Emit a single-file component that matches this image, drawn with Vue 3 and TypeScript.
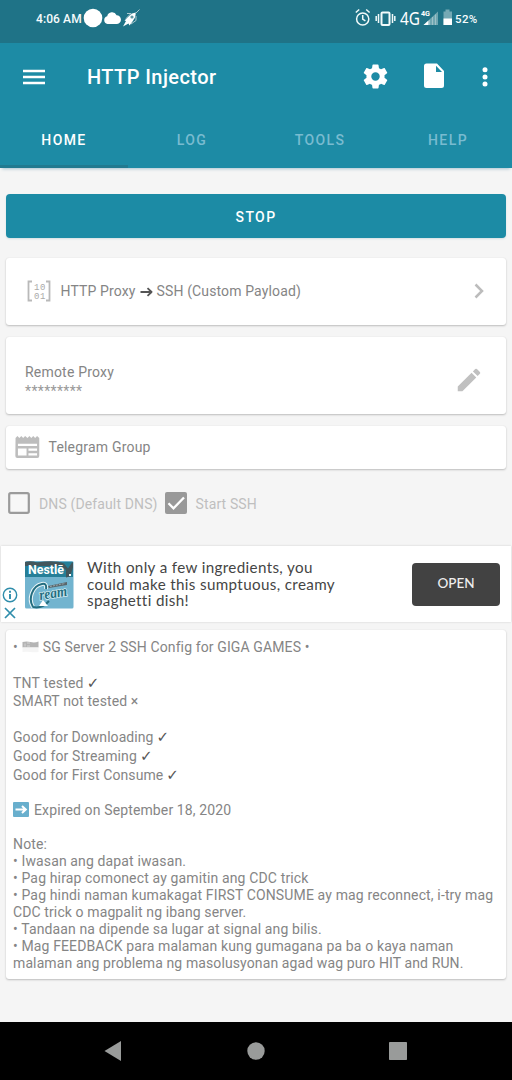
<script setup lang="ts">
interface NoteLine {
  text: string
  height: number
  spacing: number
  mark?: string
  icon?: 'flag' | 'arrow'
}

const tabs: string[] = ['HOME', 'LOG', 'TOOLS', 'HELP']

const lines: NoteLine[] = [
  { text: 'SG Server 2 SSH Config for GIGA GAMES •', height: 18, spacing: 0.12, icon: 'flag' },
  { text: '', height: 18, spacing: 0 },
  { text: 'TNT tested', height: 18, spacing: 0.18, mark: '✓' },
  { text: 'SMART not tested ×', height: 18, spacing: 0.12 },
  { text: '', height: 17, spacing: 0 },
  { text: 'Good for Downloading', height: 19, spacing: 0.06, mark: '✓' },
  { text: 'Good for Streaming', height: 19, spacing: 0.12, mark: '✓' },
  { text: 'Good for First Consume', height: 19, spacing: 0.08, mark: '✓' },
  { text: '', height: 16, spacing: 0 },
  { text: 'Expired on September 18, 2020', height: 19, spacing: 0.13, icon: 'arrow' },
  { text: '', height: 16, spacing: 0 },
  { text: 'Note:', height: 17, spacing: 0.15 },
  { text: '• Iwasan ang dapat iwasan.', height: 17, spacing: 0.13 },
  { text: '• Pag hirap comonect ay gamitin ang CDC trick', height: 17, spacing: 0.14 },
  { text: '• Pag hindi naman kumakagat FIRST CONSUME ay mag reconnect, i-try mag', height: 17, spacing: 0.14 },
  { text: 'CDC trick o magpalit ng ibang server.', height: 17, spacing: 0.11 },
  { text: '• Tandaan na dipende sa lugar at signal ang bilis.', height: 17, spacing: 0.13 },
  { text: '• Mag FEEDBACK para malaman kung gumagana pa ba o kaya naman', height: 17, spacing: 0.13 },
  { text: 'malaman ang problema ng masolusyonan agad wag puro HIT and RUN.', height: 17, spacing: 0.11 },
]
</script>

<template>
  <div class="screen">
    <header class="status">
      <span class="clock">4:06 AM</span>
      <svg class="status-left" width="58" height="22" viewBox="0 0 58 22">
        <circle cx="10" cy="11" r="9.3" fill="#fff" />
        <path d="M24.5 17a4 4 0 0 1-.3-7.8 5 5 0 0 1 9.4-1A4.4 4.4 0 0 1 33.500 17z" fill="#fff" />
        <path d="M53 5.500 49 6.500 44.500 10.500 41.500 13.500 43 14 40 19.500 45.500 16.500 46.500 18.500 49.500 14.500 52 10.500z" fill="#fff" />
        <path d="m52 7 4.500-4.500M44 6.500h4l-5 5M53 9v4.500L48 17" stroke="#a9c9cf" fill="none" />
        <circle cx="49" cy="10" r="1.600" fill="#5c96a3" />
      </svg>
      <svg class="status-right" width="98" height="22" viewBox="0 0 98 22">
        <g fill="none" stroke="#f1fafa" stroke-width="1.500">
          <circle cx="7.700" cy="12" r="6.100" />
          <path d="M7.700 8v4l2.700 1.800M.8 5.500 4.200 2.500M14.600 5.500 11.200 2.500" />
          <rect x="26.500" y="5.500" width="8" height="12.500" rx="1" stroke-width="2" />
          <path d="M23.500 7v9M21.200 9v5M37.500 7v9M39.800 9v5" />
        </g>
        <text x="45" y="18" class="net-big" textLength="20" lengthAdjust="spacingAndGlyphs">4G</text>
        <text x="66" y="9" class="net-small" textLength="9" lengthAdjust="spacingAndGlyphs">4G</text>
        <path d="M68.500 18 83 4.500V18z" fill="#6fa6b1" />
        <path d="M68.500 18 73.500 13.500V18z" fill="#fff" />
        <path d="M74.500 13v5M77.500 10v8M80.500 7.500V18" stroke="#a9c8ce" stroke-width=".8" />
        <path d="M90.500 2.500h4v2H97V18h-8.500V4.500h2z" fill="#75a9b4" />
        <path d="M88.500 11.500H97V18h-8.500z" fill="#fff" />
      </svg>
      <span class="battery">52%</span>
    </header>

    <div class="app-bar">
      <svg class="menu" width="24" height="18" viewBox="0 0 24 18">
        <path d="M1 3h22M1 9h22M1 15h22" stroke="#fff" stroke-width="2.400" />
      </svg>
      <h1>HTTP Injector</h1>
      <svg class="gear" width="29" height="29" viewBox="0 0 24 24">
        <path fill="#fff" d="M19.430 12.980c.04-.32.07-.64.07-.98s-.03-.66-.07-.98l2.110-1.650c.19-.15.24-.42.12-.64l-2-3.460c-.12-.22-.39-.3-.61-.22l-2.490 1c-.52-.4-1.080-.73-1.690-.98l-.38-2.650C14.460 2.180 14.250 2 14 2h-4c-.25 0-.46.18-.49.42l-.38 2.650c-.61.25-1.170.59-1.690.98l-2.490-1c-.23-.09-.49 0-.61.22l-2 3.460c-.13.22-.07.49.12.64l2.110 1.650c-.04.32-.07.65-.07.98s.03.66.07.98l-2.110 1.650c-.19.15-.24.42-.12.64l2 3.460c.12.22.39.3.61.22l2.490-1c.52.4 1.080.73 1.690.98l.38 2.650c.03.24.24.42.49.42h4c.25 0 .46-.18.49-.42l.38-2.650c.61-.25 1.170-.59 1.690-.98l2.490 1c.23.09.49 0 .61-.22l2-3.460c.12-.22.07-.49-.12-.64zM12 15.500a3.500 3.500 0 1 1 0-7 3.500 3.500 0 0 1 0 7z" />
      </svg>
      <svg class="file" width="20" height="26" viewBox="0 0 20 26">
        <path fill="#fff" fill-rule="evenodd" d="M2.500.5H13L20 8v14.500a2.500 2.500 0 0 1-2.500 2.500h-15A2.500 2.500 0 0 1 0 22.500V3A2.500 2.500 0 0 1 2.500.5zM12 2.800V9h6z" />
      </svg>
      <svg class="more" width="6" height="22" viewBox="0 0 6 22">
        <g fill="#fff"><circle cx="3" cy="3.700" r="2.500" /><circle cx="3" cy="10.900" r="2.500" /><circle cx="3" cy="18.100" r="2.500" /></g>
      </svg>
    </div>

    <nav class="tabs">
      <span v-for="(tab, i) in tabs" :key="tab" class="tab" :class="{ active: i === 0 }">{{ tab }}</span>
    </nav>

    <main>
      <button class="stop">STOP</button>

      <section class="card proxy">
        <svg width="24" height="22" viewBox="0 0 24 22">
          <path d="M5 1.500H1.500v19H5M19 1.500h3.500v19H19" fill="none" stroke="#b9b9b9" stroke-width="1.800" />
          <g class="bits"><text x="7" y="9.500">1</text><text x="13" y="9.500">0</text><text x="7" y="18.500">0</text><text x="13" y="18.500">1</text></g>
        </svg>
        <div class="label proxy-name">
          <span>HTTP Proxy</span>
          <svg width="13" height="10" viewBox="0 0 13 10"><path d="M.5 5h11M7.500 1.200 11.600 5 7.500 8.800" fill="none" stroke="#555" stroke-width="1.800" stroke-linejoin="round" /></svg>
          <span>SSH (Custom Payload)</span>
        </div>
        <svg class="chevron" width="10" height="16" viewBox="0 0 10 16">
          <path d="M1.500 1.500 8 8l-6.500 6.500" fill="none" stroke="#bcbcbc" stroke-width="2.500" />
        </svg>
      </section>

      <section class="card remote">
        <div>
          <div class="label">Remote Proxy</div>
          <div class="stars">*********</div>
        </div>
        <svg width="30" height="30" viewBox="0 0 24 24">
          <path fill="#c0c0c0" d="M3 17.250V21h3.750L17.810 9.940l-3.750-3.750zM20.710 7.040a1 1 0 0 0 0-1.410l-2.340-2.340a1 1 0 0 0-1.410 0l-1.830 1.830 3.750 3.750z" />
        </svg>
      </section>

      <section class="card telegram">
        <svg width="25" height="22" viewBox="0 0 26 23">
          <path d="M.5 2 2.500 0l2 2 2-2 2 2 2-2L13 2l2-2 2 2 2-2 2 2 2-2 2.300 2v19a2 2 0 0 1-2 2h-21a2 2 0 0 1-2-2z" fill="#bdbdbd" />
          <path d="M3 8h20v2.500H3zM3 13h9v7.500H3zM14 13h9v2.500h-9zM14 18h9v2.500h-9z" fill="#fff" />
        </svg>
        <span class="label">Telegram Group</span>
      </section>

      <div class="checks">
        <svg width="22" height="22" viewBox="0 0 22 22">
          <rect x="1.200" y="1.200" width="19.600" height="19.600" rx="1.500" fill="#f7f7f7" stroke="#9b9b9b" stroke-width="2.200" />
        </svg>
        <span class="dns">DNS (Default DNS)</span>
        <svg width="22" height="22" viewBox="0 0 22 22">
          <rect width="22" height="22" rx="2" fill="#999" />
          <path d="m3.500 11.300 5 5L19 5.500" fill="none" stroke="#fff" stroke-width="2.300" />
        </svg>
        <span class="ssh">Start SSH</span>
      </div>
    </main>

    <aside class="ad">
      <div class="ad-tools">
        <svg width="16" height="16" viewBox="0 0 16 16">
          <circle cx="8" cy="8" r="6.700" fill="none" stroke="#2f8dab" stroke-width="1.400" />
          <path d="M8 7v5M8 3.800v1.900" stroke="#2f8dab" stroke-width="1.900" />
        </svg>
        <svg width="12" height="12" viewBox="0 0 12 12"><path d="m1 1 10 10M11 1 1 11" stroke="#2f8dab" stroke-width="1.700" /></svg>
      </div>
      <svg class="brand" width="49" height="48" viewBox="0 0 49 48">
        <rect width="48.500" height="47.500" rx="1.500" fill="#72b4cf" />
        <path d="M0 1h48v15H0z" fill="#257f98" />
        <path d="M0 1q6-1.500 12 .5 18-3 27 1l4 5 4-6h1v5l-3 9-4 1V9L36 5H0z" fill="#42565c" />
        <text x="3" y="13" class="brand-name" textLength="36" lengthAdjust="spacingAndGlyphs">Nestlē</text>
        <path d="M44 13h2v2h-2z" fill="#fff" />
        <path d="M8 46C3 38 7 25 17 23q5-1 4 5" fill="none" stroke="#eaf5f7" stroke-width="4" />
        <path d="M8 46C3 38 7 25 17 23q5-1 4 5M8 46q9 2 16-6" fill="none" stroke="#236d80" stroke-width="2" />
        <path d="m18 39 5 6h-9z" fill="#fff" />
        <text x="15" y="39" transform="rotate(-9 15 39)" class="cream" textLength="28" lengthAdjust="spacingAndGlyphs">ream</text>
        <path d="m23 25 19-4v3l-18 3z" fill="#59656a" />
        <path d="M25 25.500 40 22.500" stroke="#b5c5ca" stroke-width=".7" stroke-dasharray="2 1" />
      </svg>
      <p>With only a few ingredients, you<br>could make this sumptuous, creamy<br>spaghetti dish!</p>
      <button>OPEN</button>
    </aside>

    <article class="card config">
      <div v-for="(line, i) in lines" :key="i" class="line" :style="{ height: line.height + 'px', letterSpacing: line.spacing + 'px' }">
        <template v-if="line.icon === 'flag'">
          <span>•</span>
          <svg class="flag" width="17" height="12" viewBox="0 0 17 12">
            <path d="M.5 1q4-1 8 0t8-.5v6H.5z" fill="#b4b4b4" />
            <path d="M.5 6.500h16V11q-4 .6-8 0t-8 0z" fill="#f5f5f5" />
            <path d="M3 2.500v3M5 2h3M5 5h3" stroke="#d5d5d5" fill="none" />
          </svg>
        </template>
        <svg v-if="line.icon === 'arrow'" class="right" width="16" height="15" viewBox="0 0 16 15">
          <rect width="16" height="15" rx="1" fill="#69afcd" />
          <path d="M2.500 7.500h10M9 4l3.800 3.500L9 11" fill="none" stroke="#fff" stroke-width="2" />
        </svg>
        <span>{{ line.text }}</span>
        <span v-if="line.mark" class="mark">{{ line.mark }}</span>
      </div>
    </article>

    <footer class="system-nav">
      <svg width="18" height="20" viewBox="0 0 18 20"><path d="M17 0v20L.5 10z" fill="#999b9a" /></svg>
      <svg width="18" height="18" viewBox="0 0 18 18"><circle cx="9" cy="9" r="8.700" fill="#999b9a" /></svg>
      <svg width="18" height="18" viewBox="0 0 18 18"><rect width="18" height="18" rx=".7" fill="#999b9a" /></svg>
    </footer>
  </div>
</template>

<style>
body { margin: 0; background: #f5f5f5; }
</style>

<style scoped>
* { box-sizing: border-box; }
.screen { width: 512px; height: 1080px; display: flex; flex-direction: column; background: #f5f5f5; font-family: Roboto, "Liberation Sans", sans-serif; overflow: hidden; }
svg { display: block; flex: none; }
button { border: 0; font-family: inherit; }
span { white-space: nowrap; }

.status { flex: none; height: 43px; display: flex; align-items: center; padding: 0 0 6px 36px; background: #1f7387; color: #f5fbfc; }
.clock { width: 47px; font-size: 12px; font-weight: 500; letter-spacing: 0.1px; }
.status-left { margin-top: -2px; }
.status-right { margin: -2px 0 0 214px; }
.battery { font-size: 11.500px; font-weight: 500; margin-left: 2px; letter-spacing: 0.4px; }
.net-big { font: 18px "Noto Sans", sans-serif; fill: #fff; }
.net-small { font: bold 8px Roboto, sans-serif; fill: #fff; }

.app-bar { flex: none; height: 69px; display: flex; align-items: center; padding-left: 22px; background: #1d8ba5; }
.menu { margin-top: -2px; }
h1 { width: 274px; margin: -1px 0 0 41px; color: #fff; font-size: 20px; line-height: 24px; font-weight: 500; letter-spacing: 0.420px; }
.gear { margin-top: -3px; }
.file { margin: -3px 0 0 34px; }
.more { margin: -2px 0 0 38px; }

.tabs { flex: none; height: 56px; display: grid; grid-template-columns: repeat(4, 1fr); background: #1d8ba5; box-shadow: 0 3px 3px -2px #a9c4d0; }
.tab { display: flex; align-items: center; justify-content: center; color: #79bbd0; border-bottom: 3px solid transparent; padding-top: 3px; font-size: 14px; font-weight: 500; letter-spacing: 1.400px; }
.tab.active { color: #fff; border-bottom-color: #217a90; }

main { flex: none; height: 378px; padding: 26px 6px 0; }
.stop { display: block; width: 100%; height: 44px; padding: 2px 0 0; border-radius: 4px; background: #1c8ba5; color: #fff; font-size: 14px; font-weight: 500; letter-spacing: 1.400px; box-shadow: 0 1px 2px #d4dfe2; }
.card { background: #fff; border-radius: 3px; box-shadow: 0 1px 2px #bdbdbd, 0 0 1px #ddd; }
.label { font-size: 14px; letter-spacing: 0.2px; color: #858585; }
.proxy { height: 67px; margin-top: 20px; display: flex; align-items: center; padding: 0 22px 1px 21px; }
.bits { font: 9px "Liberation Mono", monospace; fill: #aaa; }
.proxy-name { display: flex; align-items: center; margin-left: 9.500px; letter-spacing: 0.130px; }
.proxy-name svg { margin: 1px 4px 0; }
.chevron { margin: -1px 0 0 auto; }
.remote { height: 77px; margin-top: 12px; padding: 12px 22px 0 19px; display: flex; justify-content: space-between; align-items: center; }
.remote svg { margin-top: -3px; }
.remote .label { line-height: 19px; }
.stars { font-size: 14px; line-height: 19px; letter-spacing: 0.350px; color: #999; }
.telegram { height: 43px; margin-top: 12px; padding: 0 9px 1px; display: flex; align-items: center; }
.telegram .label { margin-left: 8.500px; }
.checks { display: flex; align-items: center; margin: 23px 0 0 2px; font-size: 14px; letter-spacing: 0.130px; color: #bfbfbf; }
.dns { width: 126px; margin: 1px 0 0 9px; }
.ssh { margin: 1px 0 0 8.500px; }

.ad { flex: none; height: 76px; margin: 0 1px; padding-left: 1px; display: flex; align-items: center; background: #fff; box-shadow: 0 0 2px #ccc; }
.ad-tools { width: 16px; height: 34px; margin-top: 40px; display: flex; flex-direction: column; align-items: center; gap: 4px; }
.brand { margin: 1px 0 0 7px; }
.brand-name { font: bold 12px Roboto, sans-serif; fill: #fff; }
.cream { font: italic bold 15px "Liberation Serif", serif; fill: #236d80; stroke: #d6eef4; stroke-width: 1.500px; paint-order: stroke; }
.ad p { width: 325px; margin: 0 0 0 13px; color: #454545; font: 15.200px/16.500px Lato, sans-serif; letter-spacing: 0.350px; white-space: nowrap; }
.ad button { width: 88px; height: 43px; padding: 0 0 2px; border-radius: 4px; background: #424242; color: #eee; font: 500 13.500px Lato, sans-serif; }

.config { flex: none; height: 349px; margin: 8px 6px 0; padding: 8px 7px; }
.line { display: flex; align-items: center; font-size: 14px; color: #858585; white-space: nowrap; }
.flag { margin: 0 4px; }
.right { margin-right: 5px; }
.mark { margin-left: 3px; font: 15px "DejaVu Sans", sans-serif; color: #555; }

.system-nav { flex: none; height: 58px; margin-top: auto; display: flex; align-items: center; justify-content: space-between; padding: 0 105px 0 104px; background: #000; }
</style>
